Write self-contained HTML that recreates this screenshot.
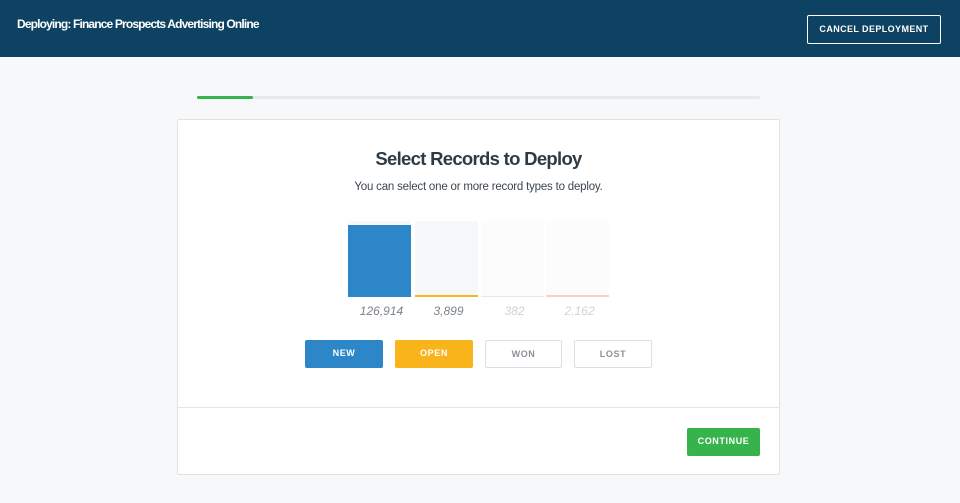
<!DOCTYPE html>
<html><head><meta charset="utf-8"><style>
*{margin:0;padding:0;box-sizing:border-box}
body{width:960px;height:503px;background:#f6f8fa;font-family:"Liberation Sans",sans-serif;position:relative;overflow:hidden}
.hdr{position:absolute;left:0;top:0;width:960px;height:57px;background:#0e4262}
.hdr .t{position:absolute;left:17px;top:17px;color:#fff;font-size:12px;font-weight:bold;letter-spacing:-0.85px}
.cancel{position:absolute;left:807px;top:15px;width:134px;height:29px;border:1px solid #fff;border-radius:2px;color:#fff;font-size:9px;font-weight:bold;text-align:center;line-height:27px;letter-spacing:0.4px}
.prog{position:absolute;left:197px;top:96px;width:563px;height:3px;background:#e6e9ec;border-radius:2px}
.prog i{position:absolute;left:0;top:0;width:56px;height:3px;background:#36b34a;border-radius:2px}
.card{position:absolute;left:177px;top:119px;width:603px;height:356px;background:#fff;border:1px solid #e0e3e6;border-radius:2px}
.div{position:absolute;left:0;top:287px;width:601px;height:1px;background:#e3e6e9}
h1{position:absolute;left:0;width:601px;top:28px;text-align:center;font-size:18.5px;color:#2e3a44;font-weight:bold;letter-spacing:-0.7px}
.sub{position:absolute;left:0;width:601px;top:61px;text-align:center;font-size:11.5px;color:#3c4650;letter-spacing:-0.2px}
.col{position:absolute;top:101px;width:63px;height:76px;background:#f7f8fa}
.col b{position:absolute;left:0;bottom:0;width:100%}
.num{position:absolute;top:184px;width:63px;text-align:center;font-size:12px;font-style:italic;color:#7a828a}
.btn{position:absolute;top:220px;height:28px;border-radius:2px;font-size:9px;font-weight:bold;text-align:center;line-height:27px;letter-spacing:0.6px}
</style></head><body>
<div class="hdr"><div class="t">Deploying: Finance Prospects Advertising Online</div><div class="cancel">CANCEL DEPLOYMENT</div></div>
<div class="prog"><i></i></div>
<div class="card">
<h1>Select Records to Deploy</h1>
<div class="sub">You can select one or more record types to deploy.</div>
<div class="col" style="left:170px"><b style="height:72px;background:#2d86c8"></b></div>
<div class="col" style="left:237px"><b style="height:2px;background:#f8b41c"></b></div>
<div class="col" style="left:303px;background:#fbfcfb"><b style="height:1px;background:#dfeee0"></b></div>
<div class="col" style="left:368px;background:#fcfcfc"><b style="height:2px;background:#fbd0c4"></b></div>
<div class="num" style="left:172px">126,914</div>
<div class="num" style="left:239px">3,899</div>
<div class="num" style="left:305px;color:#cfd3d7">382</div>
<div class="num" style="left:370px;color:#cfd3d7">2,162</div>
<div class="btn" style="left:127px;width:78px;background:#2d86c8;color:#fff">NEW</div>
<div class="btn" style="left:217px;width:78px;background:#f9b31b;color:#fff">OPEN</div>
<div class="btn" style="left:307px;width:77px;border:1px solid #dde0e3;color:#8a9198">WON</div>
<div class="btn" style="left:396px;width:78px;border:1px solid #dde0e3;color:#8a9198">LOST</div>
<div class="div"></div>
<div class="btn" style="left:509px;top:308px;width:73px;background:#36b34a;color:#fff">CONTINUE</div>
</div>
</body></html>
